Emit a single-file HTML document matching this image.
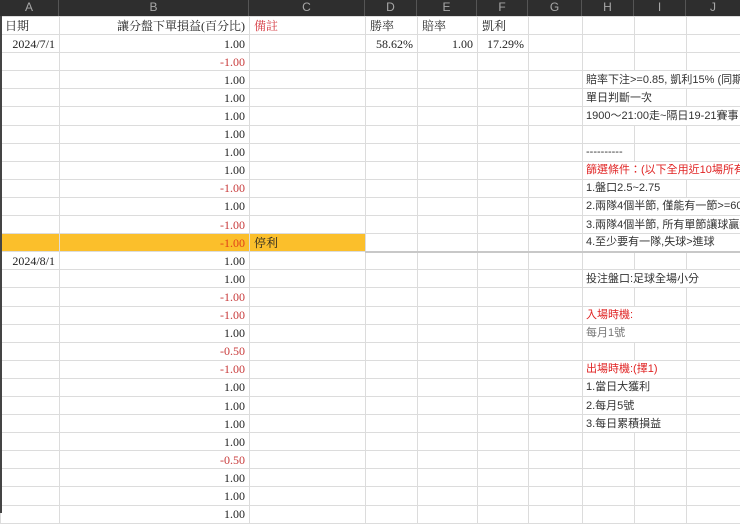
<!DOCTYPE html>
<html><head><meta charset="utf-8"><style>
body{margin:0;background:#fff;width:740px;height:513px;overflow:hidden;position:relative;font-family:"Liberation Serif","Noto Serif CJK TC",serif;}
.hdr{position:absolute;top:0;left:0;width:740px;height:16px;background:#2e2e2e;}
.hdr div{position:absolute;top:0;height:16px;line-height:16px;text-align:center;color:#a8a8a8;font:12px "Liberation Sans",sans-serif;border-right:1px solid #555;box-sizing:border-box}
table{position:absolute;top:16px;left:0;border-collapse:collapse;table-layout:fixed;width:740px}
td{height:18.1px;padding:0 4px;border:1px solid #dcdcdc;font-size:12px;color:#222;white-space:nowrap;overflow:visible;box-sizing:border-box;line-height:16px}
td.r{text-align:right}
.red{color:#d4343c}
.n{color:#c83a3a}
.hl td.y{background:#fbbf2b}
.h{font-family:"Liberation Sans","Noto Sans CJK TC",sans-serif;font-size:11px;color:#333;padding-left:3px}
.h.red{color:#e02424}
.g{color:#777}
.sep td.s{border-bottom:2px solid #c8c8c8}
.edge{position:absolute;left:0;top:16px;width:2px;height:497px;background:#444}
</style></head><body>
<div class="hdr">
<div style="left:0;width:59px">A</div><div style="left:59px;width:190px">B</div><div style="left:249px;width:116px">C</div><div style="left:365px;width:52px">D</div><div style="left:417px;width:60px">E</div><div style="left:477px;width:51px">F</div><div style="left:528px;width:54px">G</div><div style="left:582px;width:52px">H</div><div style="left:634px;width:52px">I</div><div style="left:686px;width:54px;border:none">J</div>
</div>
<table>
<colgroup><col style="width:59px"><col style="width:190px"><col style="width:116px"><col style="width:52px"><col style="width:60px"><col style="width:51px"><col style="width:54px"><col style="width:52px"><col style="width:52px"><col style="width:54px"></colgroup>
<tr><td>日期</td><td class="r">讓分盤下單損益(百分比)</td><td class="red">備註</td><td>勝率</td><td>賠率</td><td>凱利</td><td></td><td></td><td></td><td></td></tr>
<tr><td class="r">2024/7/1</td><td class="r">1.00</td><td></td><td class="r">58.62%</td><td class="r">1.00</td><td class="r">17.29%</td><td></td><td></td><td></td><td></td></tr>
<tr><td></td><td class="r n">-1.00</td><td></td><td></td><td></td><td></td><td></td><td></td><td></td><td></td></tr>
<tr><td></td><td class="r">1.00</td><td></td><td></td><td></td><td></td><td></td><td class="h" colspan="3">賠率下注&gt;=0.85, 凱利15% (同期貨)</td></tr>
<tr><td></td><td class="r">1.00</td><td></td><td></td><td></td><td></td><td></td><td class="h" colspan="2">單日判斷一次</td><td></td></tr>
<tr><td></td><td class="r">1.00</td><td></td><td></td><td></td><td></td><td></td><td class="h" colspan="3">1900～21:00走~隔日19-21賽事</td></tr>
<tr><td></td><td class="r">1.00</td><td></td><td></td><td></td><td></td><td></td><td></td><td></td><td></td></tr>
<tr><td></td><td class="r">1.00</td><td></td><td></td><td></td><td></td><td></td><td class="h">----------</td><td></td><td></td></tr>
<tr><td></td><td class="r">1.00</td><td></td><td></td><td></td><td></td><td></td><td class="h red" colspan="3">篩選條件：(以下全用近10場所有</td></tr>
<tr><td></td><td class="r n">-1.00</td><td></td><td></td><td></td><td></td><td></td><td class="h" colspan="2">1.盤口2.5~2.75</td><td></td></tr>
<tr><td></td><td class="r">1.00</td><td></td><td></td><td></td><td></td><td></td><td class="h" colspan="3">2.兩隊4個半節, 僅能有一節&gt;=60%大</td></tr>
<tr><td></td><td class="r n">-1.00</td><td></td><td></td><td></td><td></td><td></td><td class="h" colspan="3">3.兩隊4個半節, 所有單節讓球贏盤率</td></tr>
<tr class="hl sep"><td class="y"></td><td class="y r" style="color:#e0401a">-1.00</td><td class="y">停利</td><td class="s"></td><td class="s"></td><td class="s"></td><td class="s"></td><td class="h s" colspan="3">4.至少要有一隊,失球&gt;進球</td></tr>
<tr><td class="r">2024/8/1</td><td class="r">1.00</td><td></td><td></td><td></td><td></td><td></td><td></td><td></td><td></td></tr>
<tr><td></td><td class="r">1.00</td><td></td><td></td><td></td><td></td><td></td><td class="h" colspan="3">投注盤口:足球全場小分</td></tr>
<tr><td></td><td class="r n">-1.00</td><td></td><td></td><td></td><td></td><td></td><td></td><td></td><td></td></tr>
<tr><td></td><td class="r n">-1.00</td><td></td><td></td><td></td><td></td><td></td><td class="h red" colspan="2">入場時機:</td><td></td></tr>
<tr><td></td><td class="r">1.00</td><td></td><td></td><td></td><td></td><td></td><td class="h g" colspan="2">每月1號</td><td></td></tr>
<tr><td></td><td class="r n">-0.50</td><td></td><td></td><td></td><td></td><td></td><td></td><td></td><td></td></tr>
<tr><td></td><td class="r n">-1.00</td><td></td><td></td><td></td><td></td><td></td><td class="h red" colspan="2">出場時機:(擇1)</td><td></td></tr>
<tr><td></td><td class="r">1.00</td><td></td><td></td><td></td><td></td><td></td><td class="h" colspan="2">1.當日大獲利</td><td></td></tr>
<tr><td></td><td class="r">1.00</td><td></td><td></td><td></td><td></td><td></td><td class="h" colspan="2">2.每月5號</td><td></td></tr>
<tr><td></td><td class="r">1.00</td><td></td><td></td><td></td><td></td><td></td><td class="h" colspan="2">3.每日累積損益</td><td></td></tr>
<tr><td></td><td class="r">1.00</td><td></td><td></td><td></td><td></td><td></td><td></td><td></td><td></td></tr>
<tr><td></td><td class="r n">-0.50</td><td></td><td></td><td></td><td></td><td></td><td></td><td></td><td></td></tr>
<tr><td></td><td class="r">1.00</td><td></td><td></td><td></td><td></td><td></td><td></td><td></td><td></td></tr>
<tr><td></td><td class="r">1.00</td><td></td><td></td><td></td><td></td><td></td><td></td><td></td><td></td></tr>
<tr><td></td><td class="r">1.00</td><td></td><td></td><td></td><td></td><td></td><td></td><td></td><td></td></tr>
</table>
<div class="edge"></div>
</body></html>
